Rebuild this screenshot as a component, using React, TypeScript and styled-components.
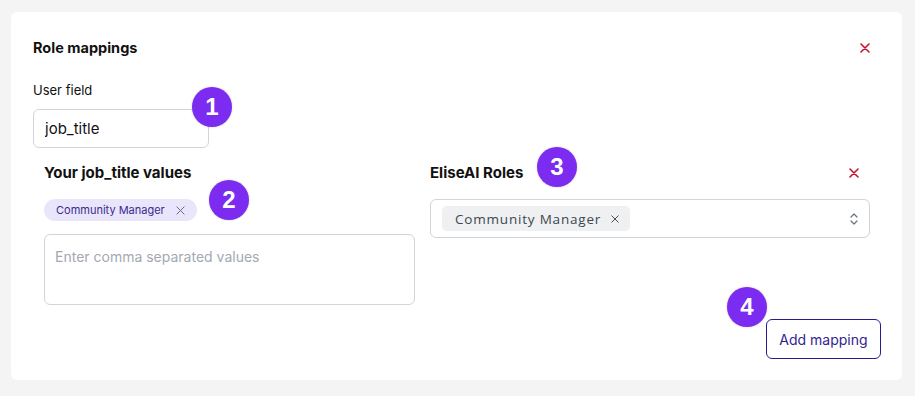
import styled, { createGlobalStyle } from 'styled-components';

const GlobalStyle = createGlobalStyle`
  body {
    margin: 0;
    background: #f4f4f5;
    font-family: Inter, "Noto Sans", sans-serif;
    color: #111;
  }
`;

const CloseIcon = ({ size = 10, color = '#c8102e', width = 1.6 }) => (
  <svg width={size} height={size} viewBox="0 0 10 10">
    <path d="M1 1 L9 9 M9 1 L1 9" stroke={color} strokeWidth={width} strokeLinecap="round" />
  </svg>
);

const ChevronsIcon = () => (
  <svg width="10" height="16" viewBox="0 0 10 16">
    <path d="M2 6 L5 3 L8 6 M2 10 L5 13 L8 10" stroke="#6b7280" strokeWidth="1.2" fill="none" strokeLinecap="round" strokeLinejoin="round" />
  </svg>
);

const App = () => {
  return (
    <>
      <GlobalStyle />
      <Page>
        <Card>
          <Header>
            <Title>Role mappings</Title>
            <IconButton>
              <CloseIcon />
            </IconButton>
          </Header>

          <Label>User field</Label>
          <TextInput defaultValue="job_title" />

          <MappingRow>
            <Column>
              <ColumnTitle>Your job_title values</ColumnTitle>
              <ValueChip>
                Community Manager
                <CloseIcon size={9} color="#6b6b8a" width={1.1} />
              </ValueChip>
              <TextArea placeholder="Enter comma separated values" />
            </Column>
            <Column>
              <ColumnHeader>
                <ColumnTitle>EliseAI Roles</ColumnTitle>
                <IconButton>
                  <CloseIcon />
                </IconButton>
              </ColumnHeader>
              <Select>
                <RoleChip>
                  Community Manager
                  <CloseIcon size={8} color="#3f4650" width={1.2} />
                </RoleChip>
                <ChevronsIcon />
              </Select>
            </Column>
          </MappingRow>

          <Footer>
            <OutlineButton>Add mapping</OutlineButton>
          </Footer>

          <Step $x={201} $y={95}>1</Step>
          <Step $x={218} $y={188}>2</Step>
          <Step $x={546} $y={155}>3</Step>
          <Step $x={736} $y={295}>4</Step>
        </Card>
      </Page>
    </>
  );
};

export default App;

const Page = styled.div`
  padding: 12px 13px 16px 11px;
`;

const Card = styled.div`
  position: relative;
  width: 891px;
  height: 368px;
  box-sizing: border-box;
  background: #fff;
  border-radius: 6px;
  padding: 24px 21px 21px 22px;
`;

const Header = styled.div`
  display: flex;
  align-items: center;
  justify-content: space-between;
  height: 24px;
`;

const Title = styled.h2`
  margin: 0;
  font-size: 14.5px;
  font-weight: 700;
  line-height: 24px;
`;

const IconButton = styled.button`
  display: flex;
  align-items: center;
  justify-content: center;
  width: 32px;
  height: 22px;
  padding: 0;
  border: none;
  background: none;
  cursor: pointer;
`;

const Label = styled.label`
  display: block;
  margin-top: 21px;
  font-size: 13px;
  line-height: 18px;
`;

const TextInput = styled.input`
  display: block;
  margin-top: 10px;
  width: 176px;
  height: 39px;
  box-sizing: border-box;
  border: 1px solid #d4d4d8;
  border-radius: 6px;
  padding: 0 11px;
  font-family: Inter, sans-serif;
  font-size: 15px;
  color: #111;
  outline: none;
`;

const MappingRow = styled.div`
  display: grid;
  grid-template-columns: 371px 440px;
  column-gap: 15px;
  margin-top: 14px;
  padding: 0 11px;
`;

const Column = styled.div`
  display: flex;
  flex-direction: column;
  align-items: flex-start;
`;

const ColumnHeader = styled.div`
  display: flex;
  align-items: center;
  justify-content: space-between;
  width: 100%;
  height: 22px;
`;

const ColumnTitle = styled.h3`
  margin: 0;
  font-size: 15px;
  font-weight: 700;
  line-height: 22px;
`;

const ValueChip = styled.span`
  display: inline-flex;
  align-items: center;
  gap: 11px;
  margin-top: 15px;
  height: 22px;
  padding: 0 12px 0 12px;
  border-radius: 11px;
  background: #e9e5fb;
  color: #3b2a8c;
  font-size: 11px;
`;

const TextArea = styled.textarea`
  margin-top: 13px;
  width: 100%;
  height: 71px;
  box-sizing: border-box;
  resize: none;
  border: 1px solid #d4d4d8;
  border-radius: 6px;
  padding: 13px 10px;
  font-family: Inter, sans-serif;
  font-size: 14px;
  outline: none;

  &::placeholder {
    color: #a3a9b3;
  }
`;

const Select = styled.div`
  margin-top: 15px;
  width: 100%;
  height: 39px;
  box-sizing: border-box;
  display: flex;
  align-items: center;
  justify-content: space-between;
  border: 1px solid #d4d4d8;
  border-radius: 6px;
  padding: 0 10px 0 11px;
`;

const RoleChip = styled.span`
  display: inline-flex;
  align-items: center;
  gap: 10px;
  height: 25px;
  padding: 0 11px 0 13px;
  border-radius: 5px;
  background: #eef0f2;
  color: #3f4650;
  font-family: "Open Sans", sans-serif;
  font-size: 13.5px;
  letter-spacing: 0.8px;
`;

const Footer = styled.div`
  display: flex;
  justify-content: flex-end;
  margin-top: 14px;
`;

const OutlineButton = styled.button`
  height: 40px;
  width: 115px;
  border: 1px solid #2a1a8e;
  border-radius: 6px;
  background: #fff;
  color: #33248f;
  font-family: Inter, sans-serif;
  font-size: 14px;
  cursor: pointer;
`;

const Step = styled.div<{ $x: number; $y: number }>`
  position: absolute;
  left: ${(p) => p.$x - 20}px;
  top: ${(p) => p.$y - 20}px;
  width: 40px;
  height: 40px;
  border-radius: 50%;
  background: #7b2cf0;
  box-shadow: 0 0 2px rgba(0, 0, 0, 0.25);
  display: flex;
  align-items: center;
  justify-content: center;
  color: #fff;
  font-family: "Liberation Sans", Arial, sans-serif;
  font-weight: 700;
  font-size: 24px;
`;
